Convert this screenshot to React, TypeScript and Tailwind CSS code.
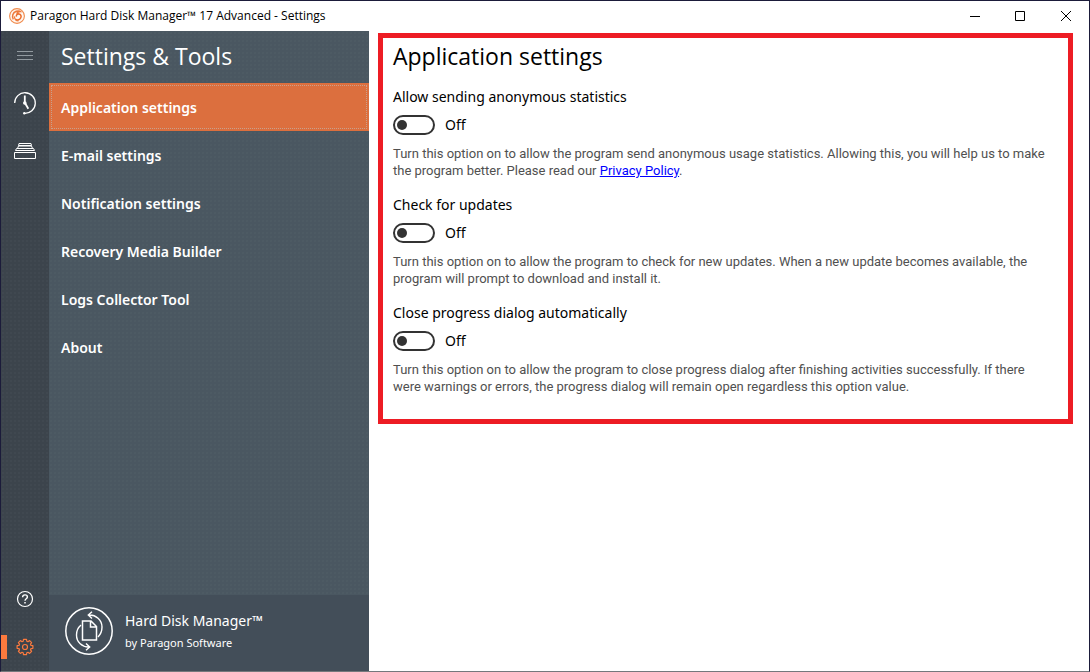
import React from 'react';

const menuItems = [
  'Application settings',
  'E-mail settings',
  'Notification settings',
  'Recovery Media Builder',
  'Logs Collector Tool',
  'About',
];

const options = [
  {
    id: 'statistics',
    label: 'Allow sending anonymous statistics',
    text: (
      <>
        Turn this option on to allow the program send anonymous usage statistics. Allowing this, you will help us to make
        <br />
        the program better. Please read our{' '}
        <a href="#privacy" className="text-[#0000ff] underline">
          Privacy Policy
        </a>
        .
      </>
    ),
  },
  {
    id: 'updates',
    label: 'Check for updates',
    text: (
      <>
        Turn this option on to allow the program to check for new updates. When a new update becomes available, the
        <br />
        program will prompt to download and install it.
      </>
    ),
  },
  {
    id: 'progress',
    label: 'Close progress dialog automatically',
    text: (
      <>
        Turn this option on to allow the program to close progress dialog after finishing activities successfully. If there
        <br />
        were warnings or errors, the progress dialog will remain open regardless this option value.
      </>
    ),
  },
];

const AppLogo = () => (
  <svg width="16" height="16" viewBox="0 0 16 16" fill="none">
    <circle cx="8" cy="8" r="7.4" fill="#fff6ef" stroke="#f08a4c" strokeWidth="1.1" />
    <path d="M4.300 11.300C2.700 8.500 3.600 4.700 7.200 3.300c1.700-.6 3.100-.4 4 .2-1.700 0-3 .9-3.400 2.200" stroke="#ee7a3c" strokeWidth="1.500" />
    <path d="M7.400 8.600c-.3-1.700 1-2.900 2.500-2.700 1.900.3 2.700 2.200 1.900 3.900-.9 2-3.200 2.700-5.200 1.700" stroke="#ea6c2c" strokeWidth="1.500" />
    <path d="M5.300 8.300c.4 2.800 1.800 4.300 4.200 4.700" stroke="#ee7a3c" strokeWidth="1.200" />
  </svg>
);

const HistoryIcon = () => (
  <svg width="24" height="24" viewBox="0 0 24 24" fill="none" stroke="#fff">
    <path d="M1.700 12A10.300 10.300 0 1 1 11.300 22.300" strokeWidth="1.300" />
    <path d="M11.800 4.500v8.500" strokeWidth="1.800" />
    <path d="M12 12l3.300 5.700" strokeWidth="1.800" />
    <circle cx="11.800" cy="12" r="1.800" fill="#fff" stroke="none" />
    <circle cx="11.300" cy="22.200" r="1.200" fill="#fff" stroke="none" />
  </svg>
);

const ArchiveIcon = () => (
  <svg width="24" height="24" viewBox="0 0 24 24" fill="none" stroke="#fff">
    <path d="M1.500 13.500h21v6h-21z" />
    <path d="M2.500 11.500l1-2h17l1 2z" />
    <path d="M4.500 9.500l1-2.500h13l1 2.500M5.500 6.500l.5-2h12l.5 2z" />
  </svg>
);

const HelpIcon = () => (
  <svg width="18" height="18" viewBox="0 0 18 18" fill="none" stroke="#fff">
    <circle cx="9" cy="9" r="7.500" strokeWidth="1.200" />
    <path d="M6.600 7.200c0-1.400 1-2.300 2.400-2.300s2.400.9 2.400 2.100c0 1.700-2.400 1.800-2.400 3.700" strokeWidth="1.400" />
    <path d="M9 12v1.500" strokeWidth="1.500" />
  </svg>
);

const GearIcon = () => (
  <svg width="18" height="18" viewBox="0 0 18 18" fill="none" stroke="#fc7a3e" strokeWidth="1.200" strokeLinejoin="round">
    <path d="M7.500 1.300h3l.3 1.900 1.200.5 1.600-1.100 2 2-1.100 1.600.5 1.200 1.900.3v2.600l-1.900.3-.5 1.200 1.100 1.600-2 2-1.600-1.100-1.200.5-.3 1.900h-3l-.3-1.900-1.200-.5-1.600 1.100-2-2 1.100-1.600-.5-1.200-1.900-.3V7.700l1.900-.3.5-1.200-1.100-1.600 2-2L6 3.700l1.200-.5z" />
    <circle cx="9" cy="9" r="2.500" />
  </svg>
);

const ProductIcon = () => (
  <svg width="48" height="48" viewBox="0 0 48 48" fill="none" stroke="#fff">
    <circle cx="24" cy="24" r="23.200" strokeWidth="1.500" />
    <path d="M17.500 14h8.500l5.500 5.500V33h-14zM25.500 14v6h6" strokeWidth="1.500" />
    <path d="M23.500 8C31 7.500 37 13 37 20c0 4.500-1.500 7.500-4 10M27 4.800L23.300 8l3.700 3.500" strokeWidth="1.400" />
    <path d="M24.500 40C17 40.500 11.500 35 11.500 28c0-4.500 1.500-7.500 4.500-10M21 36.500l3.700 3.500L21 43.200" strokeWidth="1.400" />
  </svg>
);

const TitleBar = () => (
  <header className="h-[30px] shrink-0 flex items-center bg-white text-black">
    <div className="grow flex items-center gap-x-[5px] pl-2 font-['Open_Sans',sans-serif] text-[12px]">
      <AppLogo />
      <span>Paragon Hard Disk Manager™ 17 Advanced - Settings</span>
    </div>
    <button type="button" aria-label="Minimize" className="w-[45px] h-full flex items-center justify-center">
      <svg width="10" height="10" stroke="#000">
        <path d="M0 5.500h10" />
      </svg>
    </button>
    <button type="button" aria-label="Maximize" className="w-[45px] h-full flex items-center justify-center">
      <svg width="10" height="10" fill="none" stroke="#000">
        <path d="M.5.5h9v9h-9z" />
      </svg>
    </button>
    <button type="button" aria-label="Close" className="w-[47px] h-full flex items-center justify-center">
      <svg width="10" height="10" stroke="#000">
        <path d="M0 0l10 10M10 0L0 10" />
      </svg>
    </button>
  </header>
);

const Rail = () => (
  <nav className="w-12 shrink-0 flex flex-col bg-[#3c444c] bg-[radial-gradient(#ffffff05_1px,transparent_1px)] bg-[size:4px_4px]">
    <button type="button" aria-label="Menu" className="h-12 flex items-center justify-center">
      <svg width="16" height="10" stroke="#929aa0">
        <path d="M0 1.500h16M0 5.500h16M0 9.500h16" />
      </svg>
    </button>
    <button type="button" aria-label="History" className="h-12 flex items-center justify-center">
      <HistoryIcon />
    </button>
    <button type="button" aria-label="Archives" className="h-12 flex items-center justify-center">
      <ArchiveIcon />
    </button>
    <button type="button" aria-label="Help" className="h-12 mt-auto flex items-center justify-center">
      <HelpIcon />
    </button>
    <button type="button" aria-label="Settings" className="h-12 flex items-center">
      <span className="w-1.5 h-6 bg-[#fc7a3e]" />
      <span className="grow flex justify-center pr-1.5">
        <GearIcon />
      </span>
    </button>
  </nav>
);

const Sidebar = () => (
  <aside className="w-80 shrink-0 flex flex-col text-white bg-[#4a5761] bg-[radial-gradient(#7fa0a00c_1px,transparent_1px)] bg-[size:4px_4px]">
    <h1 className="h-[52px] px-3 font-['Open_Sans',sans-serif] text-[23px] leading-[50px]">Settings &amp; Tools</h1>
    <ul>
      {menuItems.map((item, index) => (
        <li key={item} className={index === 0 ? 'h-12 p-0.5 bg-[#dc6f3e]' : 'h-12 p-0.5'}>
          <button
            type="button"
            className={
              index === 0
                ? 'w-full h-full px-[9px] text-left text-[14px] font-semibold border border-dotted border-[#c9a08c]'
                : 'w-full h-full px-[9px] text-left text-[14px] font-semibold border border-transparent'
            }
          >
            {item}
          </button>
        </li>
      ))}
    </ul>
    <footer className="h-[76px] mt-auto flex items-center gap-x-3 px-4 pb-1 bg-[#434e59]">
      <ProductIcon />
      <div className="flex flex-col">
        <span className="text-[14px] leading-6">Hard Disk Manager™</span>
        <span className="text-[11px] leading-5">by Paragon Software</span>
      </div>
    </footer>
  </aside>
);

const App = () => {
  return (
    <div className="min-h-screen flex flex-col border border-[#1b1b3a] border-b-[#74787c] bg-white font-['Noto_Sans','Open_Sans',sans-serif]">
      <TitleBar />
      <div className="grow flex">
        <Rail />
        <Sidebar />
        <main className="grow min-w-0 pt-0.5 pl-[9px] pr-4">
          <section className="border-5 border-[#ed1c24] px-2.5 pb-6 text-black">
            <h2 className="font-['Open_Sans',sans-serif] text-[23px] leading-9">Application settings</h2>
            <div className="flex flex-col gap-y-4 pt-[13px]">
              {options.map((option) => (
                <div key={option.id}>
                  <label htmlFor={option.id} className="block text-[14px] leading-5">
                    {option.label}
                  </label>
                  <div className="flex items-center gap-x-2.5 mt-2">
                    <input
                      id={option.id}
                      type="checkbox"
                      role="switch"
                      className="appearance-none w-[42px] h-5 flex items-center px-0.5 rounded-full border-2 border-[#333333] before:block before:w-2.5 before:h-2.5 before:rounded-full before:bg-[#333333] checked:justify-end"
                    />
                    <span className="text-[14px] leading-5">Off</span>
                  </div>
                  <p className="mt-2.5 font-['Roboto',sans-serif] text-[13px] leading-[17px] text-[#505050]">{option.text}</p>
                </div>
              ))}
            </div>
          </section>
        </main>
      </div>
    </div>
  );
};

export default App;
